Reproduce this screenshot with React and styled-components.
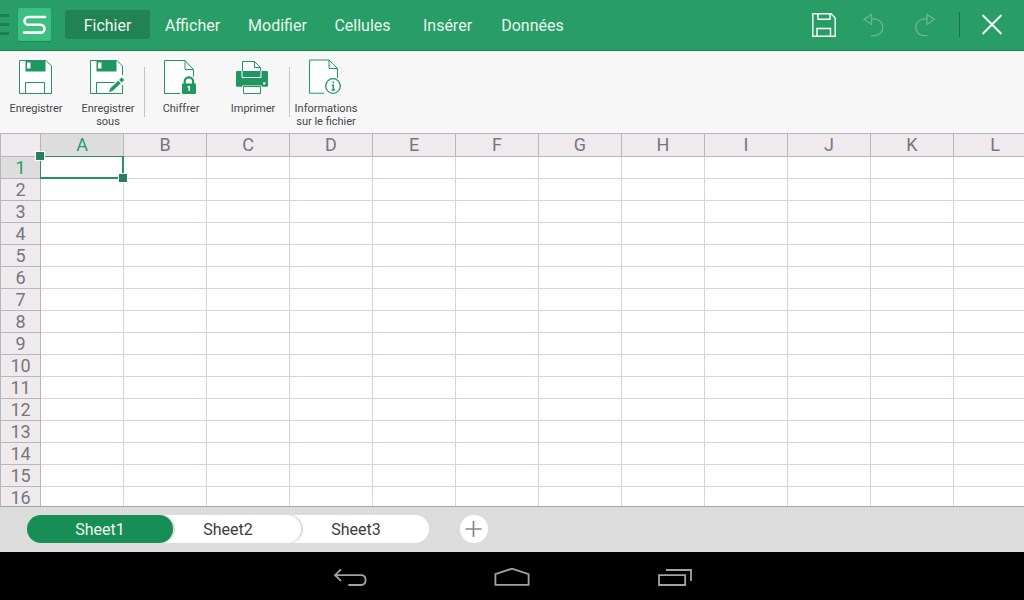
import { useState } from "react";
import styled, { createGlobalStyle } from "styled-components";

const MENUS = ["Fichier", "Afficher", "Modifier", "Cellules", "Insérer", "Données"];
const COLUMNS = "ABCDEFGHIJKL".split("");
const ROWS = Array.from({ length: 16 }, (_, i) => i + 1);
const SHEETS = ["Sheet1", "Sheet2", "Sheet3"];

export default function App() {
  const [menu, setMenu] = useState("Fichier");
  const [sheet, setSheet] = useState("Sheet1");

  return (
    <Screen>
      <GlobalStyle />
      <TopBar>
        <DrawerButton aria-label="Menu">
          <i />
          <i />
          <i />
        </DrawerButton>
        <Logo viewBox="0 0 33 33" aria-hidden="true">
          <path d="M27 9H10.4a3.9 3.9 0 0 0 0 7.8h12.2a3.9 3.9 0 0 1 0 7.8H6" />
        </Logo>
        <Menu>
          {MENUS.map((name) => (
            <MenuButton key={name} $active={name === menu} onClick={() => setMenu(name)}>
              {name}
            </MenuButton>
          ))}
        </Menu>
        <BarButton aria-label="Enregistrer">
          <BarIcon viewBox="0 0 24 24">
            <path d="M.8.8H19L23.2 5v18.2H.8z M6 1v5.2h12V1 M5 23v-7.5h13.5V23" />
          </BarIcon>
        </BarButton>
        <BarButton aria-label="Annuler" disabled>
          <BarIcon viewBox="0 0 24 24">
            <path d="M9.5 1.5v10L2 6.3z M9.5 6h3a8.3 8.3 0 0 1 0 16.6H9" />
          </BarIcon>
        </BarButton>
        <BarButton aria-label="Rétablir" disabled>
          <BarIcon viewBox="0 0 24 24">
            <path d="M15 1.5v10l7.5-5.2z M15 6h-3a8.3 8.3 0 0 0 0 16.6h3.5" />
          </BarIcon>
        </BarButton>
        <BarDivider />
        <CloseButton aria-label="Fermer">
          <BarIcon viewBox="0 0 24 24">
            <path strokeWidth="1.8" d="M2.5 2l19 19M21.5 2l-19 19" />
          </BarIcon>
        </CloseButton>
      </TopBar>

      <Tools>
        <Tool>
          <SaveIcon />
          <span>Enregistrer</span>
        </Tool>
        <Tool>
          <SaveAsIcon />
          <span>Enregistrer sous</span>
        </Tool>
        <ToolDivider />
        <Tool>
          <LockIcon />
          <span>Chiffrer</span>
        </Tool>
        <Tool>
          <PrintIcon />
          <span>Imprimer</span>
        </Tool>
        <ToolDivider />
        <Tool>
          <InfoIcon />
          <span>Informations sur le fichier</span>
        </Tool>
      </Tools>

      <GridArea>
        <Grid>
          <thead>
            <tr>
              <Corner />
              {COLUMNS.map((c) => (
                <ColHead key={c} scope="col" $active={c === "A"}>
                  {c}
                </ColHead>
              ))}
            </tr>
          </thead>
          <tbody>
            {ROWS.map((r) => (
              <tr key={r}>
                <RowHead scope="row" $active={r === 1}>
                  {r}
                </RowHead>
                {COLUMNS.map((c) => (
                  <Cell key={c}>
                    {r === 1 && c === "A" && (
                      <Selection>
                        <Handle />
                        <Handle $end />
                      </Selection>
                    )}
                  </Cell>
                ))}
              </tr>
            ))}
          </tbody>
        </Grid>
      </GridArea>

      <SheetBar>
        {SHEETS.map((name, i) => (
          <SheetTab
            key={name}
            $active={name === sheet}
            $level={SHEETS.length - i}
            onClick={() => setSheet(name)}
          >
            {name}
          </SheetTab>
        ))}
        <AddButton aria-label="Ajouter une feuille">
          <svg width="18" height="18" viewBox="0 0 18 18" fill="none" stroke="#868686" strokeWidth="1.7">
            <path d="M8.5 1v16M.5 9h16" />
          </svg>
        </AddButton>
      </SheetBar>

      <SystemBar>
        <SystemButton aria-label="Retour">
          <SystemIcon viewBox="0 0 36 24">
            <path d="M9 5.3l-6 5.9 6 5.6M3 11.2h26q4.6 0 4.6 4.9T29 21H16.3" />
          </SystemIcon>
        </SystemButton>
        <SystemButton aria-label="Accueil">
          <SystemIcon viewBox="0 0 36 24">
            <path d="M1.4 20.8V10.2L18 4.6l16.6 5.6v10.6z" />
          </SystemIcon>
        </SystemButton>
        <SystemButton aria-label="Applications récentes">
          <SystemIcon viewBox="0 0 36 24">
            <path d="M3 11.2h26.2V21H3z M10 6h25v11" />
          </SystemIcon>
        </SystemButton>
      </SystemBar>
    </Screen>
  );
}

function SaveIcon() {
  return (
    <ToolIcon viewBox="0 0 36 36">
      <path fill="#fff" d="M1.5 1.5H28L33.5 7v27.5h-32z" />
      <path fill="#1f985f" stroke="none" d="M7.5 1h20v11.5h-20z" />
      <path fill="#fff" stroke="none" d="M9 3.5h3.5v6H9z" />
      <path d="M7.5 34V23.5h19V34" />
    </ToolIcon>
  );
}

function SaveAsIcon() {
  return (
    <ToolIcon viewBox="0 0 36 36">
      <path fill="#fff" stroke="none" d="M0 1h27l5 6v27H0z" />
      <path d="M32.5 16V7L27 1.5H.5v33h32V26" />
      <path fill="#1f985f" stroke="none" d="M6.5 1h20v11.5h-20z" />
      <path fill="#fff" stroke="none" d="M8 3.5h3.5v6H8z" />
      <path d="M6.5 34V23.5h18" />
      <path stroke="#f7f7f7" strokeWidth="6" d="M21.5 31L34 19.5" />
      <path strokeWidth="3.6" d="M21.5 30.5l8-7.5" />
      <path strokeWidth="3.6" d="M30.4 22.1l2.6-2.4" />
      <path fill="#1f985f" stroke="none" d="M19 33l1.2-4 2.8 2.9z" />
    </ToolIcon>
  );
}

function LockIcon() {
  return (
    <ToolIcon viewBox="0 0 36 36">
      <path fill="#fff" stroke="none" d="M1 1h21l9 9v10L18 34.5H1z" />
      <path d="M17.5 34.5h-16v-33H22l8.5 9V18M22 1.5v9h8.5" />
      <path stroke="#f7f7f7" strokeWidth="3" fill="#f7f7f7" d="M19 24h2v-2a5 5 0 0 1 10 0v2h2v11H19z" />
      <path strokeWidth="2.2" d="M21.7 25v-2.5a4.2 4.2 0 0 1 8.4 0V25" />
      <rect fill="#1f985f" stroke="none" x="19" y="24.5" width="14" height="10.5" rx="1" />
      <path stroke="#fff" strokeWidth="1.4" d="M24.6 27.7h1.6V32" />
    </ToolIcon>
  );
}

function PrintIcon() {
  return (
    <ToolIcon viewBox="0 0 36 36">
      <path fill="#1f985f" stroke="none" d="M1 13q0-1 1-1h30q1 0 1 1v13.7q0 1-1 1H2q-1 0-1-1z" />
      <path fill="#fff" d="M7.5 13V2.5h12l6 6V13" />
      <path d="M19.5 2.5v6h6" />
      <path fill="#1f985f" stroke="#fff" d="M7 12v6.5h19V12" />
      <path fill="#fff" stroke="none" d="M28.2 23.3h2.2v2.2h-2.2z" />
      <path fill="#fff" stroke="#fff" d="M7.5 27h19v7.5h-19z" />
      <path fill="#fff" d="M8.5 27.5h17v7h-17z" />
    </ToolIcon>
  );
}

function InfoIcon() {
  return (
    <ToolIcon viewBox="0 0 36 36">
      <path fill="#fff" stroke="none" d="M1 1h20l9 9v12L18 34H1z" />
      <path d="M16 34.2H1.5V1H21l8.5 8.5V19M21 1v8.5h8.5" />
      <circle cx="25" cy="27" r="9" fill="#f7f7f7" stroke="none" />
      <circle cx="25" cy="27" r="7.3" fill="#fff" strokeWidth="1.3" />
      <path strokeWidth="1.5" d="M25.3 22.5v1.7M23.8 26.2h1.5V31M23.5 31h3.6" />
    </ToolIcon>
  );
}

const GlobalStyle = createGlobalStyle`
  * {
    box-sizing: border-box;
  }
  body {
    margin: 0;
    font-family: Roboto, "Liberation Sans", sans-serif;
  }
  button {
    margin: 0;
    padding: 0;
    border: none;
    background: none;
    font-family: inherit;
    cursor: pointer;
  }
`;

const Screen = styled.div`
  display: flex;
  flex-direction: column;
  height: 100vh;
  overflow: hidden;
`;

const TopBar = styled.header`
  display: flex;
  align-items: center;
  flex: none;
  height: 51px;
  padding-bottom: 1px;
  background: #289d66;
  border-bottom: 1px solid #1b7f4f;
`;

const DrawerButton = styled.button`
  display: flex;
  flex-direction: column;
  gap: 6px;
  width: 9px;
  margin-right: 9px;

  i {
    height: 3px;
    background: #1f7d50;
  }
`;

const Logo = styled.svg`
  width: 33px;
  height: 33px;
  border-radius: 2px;
  background: #3cc081;
  box-shadow: 0 1px 1px rgba(0, 0, 0, 0.15);
  fill: none;
  stroke: #fff;
  stroke-width: 2.6;
  stroke-linecap: round;
`;

const Menu = styled.nav`
  display: flex;
  flex: 1;
  margin-left: 14px;
`;

const MenuButton = styled.button`
  width: 85px;
  height: 29px;
  padding-top: 1px;
  border-radius: 3px;
  background: ${(p) => (p.$active ? "#218253" : "none")};
  color: #e9f5ef;
  font-size: 16px;
`;

const BarButton = styled.button`
  display: flex;
  align-items: center;
  justify-content: center;
  width: 50px;
  height: 49px;
  padding-top: 1px;
  color: #fff;

  &:disabled {
    color: #62b78f;
  }
`;

const CloseButton = styled(BarButton)`
  width: 64px;
`;

const BarIcon = styled.svg`
  width: 24px;
  height: 24px;
  fill: none;
  stroke: currentColor;
  stroke-width: 1.4;
`;

const BarDivider = styled.div`
  width: 1px;
  height: 25px;
  margin-left: 10px;
  background: #1c6f48;
`;

const Tools = styled.div`
  display: flex;
  flex: none;
  height: 82px;
  background: #f7f7f7;
`;

const Tool = styled.button`
  display: flex;
  flex-direction: column;
  align-items: center;
  gap: 7px;
  width: 72px;
  padding-top: 8px;
  color: #46464c;
  font-size: 11px;
  line-height: 13px;
`;

const ToolIcon = styled.svg`
  width: 36px;
  height: 36px;
  fill: none;
  stroke: #1f985f;
  stroke-width: 1;
`;

const ToolDivider = styled.div`
  width: 1px;
  height: 50px;
  margin-top: 16px;
  background: #c4c4c4;
`;

const GridArea = styled.main`
  flex: 1;
  min-height: 0;
  overflow: hidden;
  background: #fff;
  border-bottom: 1px solid #a5a5a5;
`;

const Grid = styled.table`
  width: max-content;
  table-layout: fixed;
  border-collapse: separate;
  border-spacing: 0;
`;

const Head = styled.th`
  padding: 0;
  border: 0 solid #b9b5ba;
  border-right-width: 1px;
  border-bottom-width: 1px;
  background: ${(p) => (p.$active ? "#dddddd" : "#eeeaee")};
  color: ${(p) => (p.$active ? "#289d66" : "#77777b")};
  font-size: 18px;
  font-weight: 400;
  line-height: 20px;
`;

const ColHead = styled(Head)`
  width: 83px;
  min-width: 83px;
  height: 24px;
  border-top-width: 1px;
`;

const RowHead = styled(Head)`
  height: 22px;
  border-left-width: 1px;
`;

const Corner = styled(Head).attrs({ as: "td" })`
  width: 41px;
  min-width: 41px;
  border-top-width: 1px;
  border-left-width: 1px;
`;

const Cell = styled.td`
  position: relative;
  padding: 0;
  border-right: 1px solid #d4d2e4;
  border-bottom: 1px solid #d4d2e4;
`;

const Selection = styled.div`
  position: absolute;
  inset: -1px;
  z-index: 1;
  border: solid #2b9162;
  border-width: 1px 2px 2px 1px;
`;

const Handle = styled.span`
  position: absolute;
  ${(p) => (p.$end ? "right: -6px; bottom: -6px;" : "left: -6px; top: -6px;")}
  width: 10px;
  height: 10px;
  border: 1px solid #fff;
  background: #27805a;
`;

const SheetBar = styled.div`
  display: flex;
  align-items: center;
  flex: none;
  height: 45px;
  padding: 0 0 1px 27px;
  background: #dcdcdc;
`;

const SheetTab = styled.button`
  position: relative;
  z-index: ${(p) => p.$level};
  width: 146px;
  height: 28px;
  padding-top: 1px;
  border-radius: 14px;
  background: ${(p) => (p.$active ? "#178e56" : "#fff")};
  box-shadow: 2px 0 0 #dcdcdc;
  color: ${(p) => (p.$active ? "#eef7f2" : "#3c3c44")};
  font-size: 16px;

  & + & {
    margin-left: -18px;
  }
`;

const AddButton = styled.button`
  display: flex;
  align-items: center;
  justify-content: center;
  width: 28px;
  height: 28px;
  margin-left: 31px;
  border-radius: 50%;
  background: #fff;
`;

const SystemBar = styled.footer`
  display: flex;
  align-items: center;
  justify-content: center;
  flex: none;
  height: 48px;
  background: #000;
`;

const SystemButton = styled.button`
  display: flex;
  align-items: center;
  justify-content: center;
  width: 162px;
  height: 48px;
`;

const SystemIcon = styled.svg`
  width: 36px;
  height: 24px;
  fill: none;
  stroke: #a3a3a3;
  stroke-width: 1.8;
`;
